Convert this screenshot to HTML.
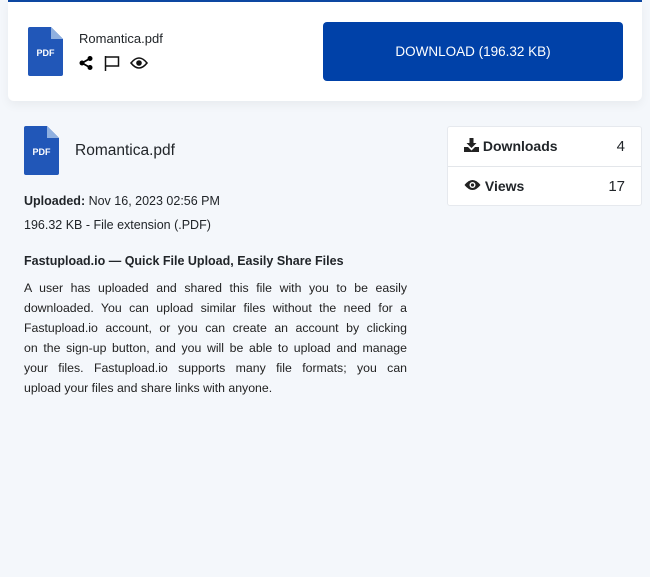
<!DOCTYPE html>
<html><head><style>
*{margin:0;padding:0;box-sizing:border-box}
body{width:650px;height:577px;background:#f4f7fb;font-family:"Liberation Sans",Roboto,sans-serif;color:#212529;position:relative;overflow:hidden}
.card{position:absolute;left:8px;top:0;width:634px;height:101px;background:#fff;border-top:2px solid #0d47a1;border-radius:0 0 6px 6px;box-shadow:0 4px 10px rgba(0,0,0,0.05)}
.btn{position:absolute;left:323px;top:22px;width:300px;height:59px;background:#0041a8;border-radius:4px;color:#fff;font-size:13.5px;text-align:center;line-height:60px}
.pdf{position:absolute}
.t{position:absolute;white-space:nowrap}
.side{position:absolute;left:447px;top:126px;width:195px;height:80px;background:#fff;border:1px solid #e6e9ee;border-radius:3px}
.row{position:absolute;left:16px;right:16px;font-size:14px;font-weight:bold;height:40px;line-height:39px}
.row span{float:right;font-weight:normal;font-size:15px}
.d{position:absolute;left:24px;top:278px;width:383px;font-size:12.3px;line-height:20px;color:#222}
.d div{text-align:justify;text-align-last:justify;white-space:nowrap}
.d div.l{text-align-last:left}
</style></head><body>
<div class="card"></div>
<svg class="pdf" style="left:28px;top:27px" width="35" height="49" viewBox="0 0 35 49"><path d="M2 0H23L35 12V47a2 2 0 0 1-2 2H2a2 2 0 0 1-2-2V2a2 2 0 0 1 2-2z" fill="#2157b8"/><path d="M23 0L35 12H23z" fill="#8fb0e0"/><text x="17.5" y="29" font-size="9" font-weight="bold" fill="#fff" text-anchor="middle" font-family="Liberation Sans">PDF</text></svg>
<div class="t" style="left:79px;top:31px;font-size:13px">Romantica.pdf</div>
<svg style="position:absolute;left:79px;top:56px" width="14" height="14" viewBox="0 0 14 14"><circle cx="11" cy="2.5" r="2.5"/><circle cx="11" cy="11.5" r="2.5"/><circle cx="3" cy="7" r="2.5"/><path d="M11 2.5L3 7L11 11.5" stroke="#000" stroke-width="1.8" fill="none"/></svg>
<svg style="position:absolute;left:104px;top:55px" width="16" height="16" viewBox="0 0 16 16"><path d="M1.5 1v15M1.5 2h13v9h-13" stroke="#111" stroke-width="1.5" fill="none"/></svg>
<svg style="position:absolute;left:130px;top:56px" width="18" height="14" viewBox="0 0 18 14"><path d="M1 7Q9 -3 17 7Q9 17 1 7z" stroke="#111" stroke-width="1.6" fill="none"/><circle cx="9" cy="7" r="2.8" fill="#111"/></svg>
<div class="btn">DOWNLOAD (196.32 KB)</div>
<svg class="pdf" style="left:24px;top:126px" width="35" height="49" viewBox="0 0 35 49"><path d="M2 0H23L35 12V47a2 2 0 0 1-2 2H2a2 2 0 0 1-2-2V2a2 2 0 0 1 2-2z" fill="#2157b8"/><path d="M23 0L35 12H23z" fill="#8fb0e0"/><text x="17.5" y="29" font-size="9" font-weight="bold" fill="#fff" text-anchor="middle" font-family="Liberation Sans">PDF</text></svg>
<div class="t" style="left:75px;top:142px;font-size:15.5px">Romantica.pdf</div>
<div class="t" style="left:24px;top:194px;font-size:12.5px"><b>Uploaded:</b> Nov 16, 2023 02:56 PM</div>
<div class="t" style="left:24px;top:218px;font-size:12.5px">196.32 KB - File extension (.PDF)</div>
<div class="t" style="left:24px;top:254px;font-size:12.5px;font-weight:bold">Fastupload.io — Quick File Upload, Easily Share Files</div>
<div class="d">
<div>A user has uploaded and shared this file with you to be easily</div>
<div>downloaded. You can upload similar files without the need for a</div>
<div>Fastupload.io account, or you can create an account by clicking</div>
<div>on the sign-up button, and you will be able to upload and manage</div>
<div>your files. Fastupload.io supports many file formats; you can</div>
<div class="l">upload your files and share links with anyone.</div>
</div>
<div class="side">
<div class="row" style="top:0;border-bottom:1px solid #e3e6ea;left:0;right:0;padding:0 16px"><svg width="15" height="14" viewBox="0 0 15 14" style="vertical-align:-1px"><path d="M5.5 0h4v5h3l-5 5-5-5h3z M0 9h4l3.5 3.5L11 9h4v5H0z" fill="#222"/></svg> Downloads<span>4</span></div>
<div class="row" style="top:40px;left:0;right:0;padding:0 16px"><svg width="17" height="12" viewBox="0 0 17 12" style="vertical-align:0"><path d="M0.5 6Q8.5 -4 16.5 6Q8.5 16 0.5 6z" fill="#222"/><circle cx="8.5" cy="6" r="3" fill="#fff"/><circle cx="8.5" cy="6" r="1.6" fill="#222"/></svg> Views<span>17</span></div>
</div>
</body></html>
